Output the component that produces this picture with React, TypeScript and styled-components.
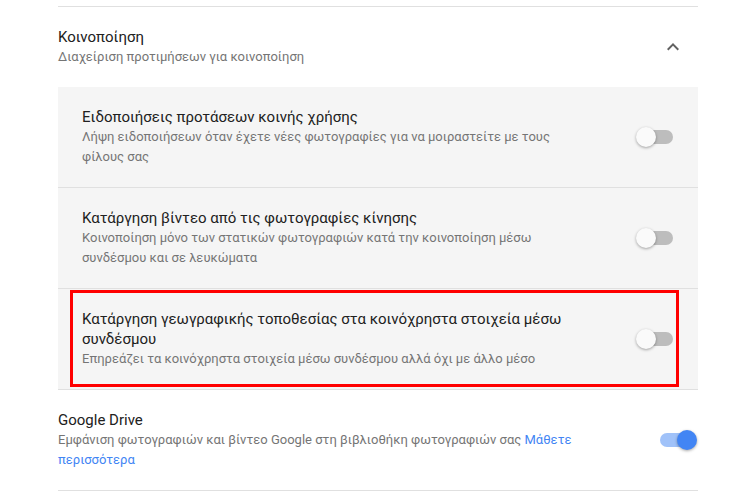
import styled, { createGlobalStyle } from "styled-components";

const Global = createGlobalStyle`
  body {
    margin: 0;
    background: #ffffff;
    font-family: Roboto, "Noto Sans", sans-serif;
  }
`;

const Page = styled.div`
  width: 640px;
  margin-left: 58px;
  margin-top: 6px;
  border-top: 1px solid #e0e0e0;
`;

const Header = styled.div`
  display: flex;
  align-items: center;
  padding: 20px 0;
`;

const TextCol = styled.div<{ $width: number }>`
  width: ${(p) => p.$width}px;
  display: flex;
  flex-direction: column;
`;

const Title = styled.div`
  font-size: 15px;
  line-height: 20px;
  color: #212121;
`;

const Sub = styled.div`
  font-size: 13px;
  line-height: 20px;
  color: #757575;
`;

const Link = styled.a`
  color: #4285f4;
  text-decoration: none;
`;

const Spacer = styled.div`
  flex: 1;
`;

const Chevron = styled.svg`
  width: 24px;
  height: 24px;
  margin-right: 13px;
  fill: #616161;
`;

const Panel = styled.div`
  background: #f5f5f5;
  border-bottom: 1px solid #e0e0e0;
`;

const Row = styled.div`
  position: relative;
  display: flex;
  align-items: center;
  padding: 20px 25px 20px 24px;
  & + & {
    border-top: 1px solid #e0e0e0;
  }
  & + &::before {
    content: none;
  }
`;

const Highlight = styled.div`
  position: absolute;
  left: 12px;
  right: 19px;
  top: 1px;
  bottom: 2px;
  border: 3px solid #ff0000;
  pointer-events: none;
`;

const DriveRow = styled.div`
  display: flex;
  align-items: center;
  padding: 20px 4px 20px 0;
  border-bottom: 1px solid #e0e0e0;
`;

const Switch = styled.div<{ $on?: boolean }>`
  position: relative;
  width: 34px;
  height: 14px;
  border-radius: 7px;
  flex-shrink: 0;
  background: ${(p) => (p.$on ? "rgba(66,133,244,0.5)" : "#bdbdbd")};
  &::after {
    content: "";
    position: absolute;
    top: -3px;
    left: ${(p) => (p.$on ? "17px" : "-3px")};
    width: 20px;
    height: 20px;
    border-radius: 50%;
    background: ${(p) => (p.$on ? "#4285f4" : "#fafafa")};
    box-shadow: 0 1px 3px rgba(0, 0, 0, 0.35);
  }
`;

const items = [
  {
    title: "Ειδοποιήσεις προτάσεων κοινής χρήσης",
    sub: "Λήψη ειδοποιήσεων όταν έχετε νέες φωτογραφίες για να μοιραστείτε με τους φίλους σας",
  },
  {
    title: "Κατάργηση βίντεο από τις φωτογραφίες κίνησης",
    sub: "Κοινοποίηση μόνο των στατικών φωτογραφιών κατά την κοινοποίηση μέσω συνδέσμου και σε λευκώματα",
  },
  {
    title: "Κατάργηση γεωγραφικής τοποθεσίας στα κοινόχρηστα στοιχεία μέσω συνδέσμου",
    sub: "Επηρεάζει τα κοινόχρηστα στοιχεία μέσω συνδέσμου αλλά όχι με άλλο μέσο",
    marked: true,
  },
];

export default function App() {
  return (
    <>
      <Global />
      <Page>
        <Header>
          <TextCol $width={500}>
            <Title>Κοινοποίηση</Title>
            <Sub>Διαχείριση προτιμήσεων για κοινοποίηση</Sub>
          </TextCol>
          <Spacer />
          <Chevron viewBox="0 0 24 24">
            <path d="M12 8l-6 6 1.41 1.41L12 10.83l4.59 4.58L18 14z" />
          </Chevron>
        </Header>
        <Panel>
          {items.map((it) => (
            <Row key={it.title}>
              <TextCol $width={510}>
                <Title>{it.title}</Title>
                <Sub>{it.sub}</Sub>
              </TextCol>
              <Spacer />
              <Switch />
              {it.marked && <Highlight />}
            </Row>
          ))}
        </Panel>
        <DriveRow>
          <TextCol $width={530}>
            <Title>Google Drive</Title>
            <Sub>
              Εμφάνιση φωτογραφιών και βίντεο Google στη βιβλιοθήκη φωτογραφιών σας{" "}
              <Link href="#">Μάθετε περισσότερα</Link>
            </Sub>
          </TextCol>
          <Spacer />
          <Switch $on />
        </DriveRow>
      </Page>
    </>
  );
}
